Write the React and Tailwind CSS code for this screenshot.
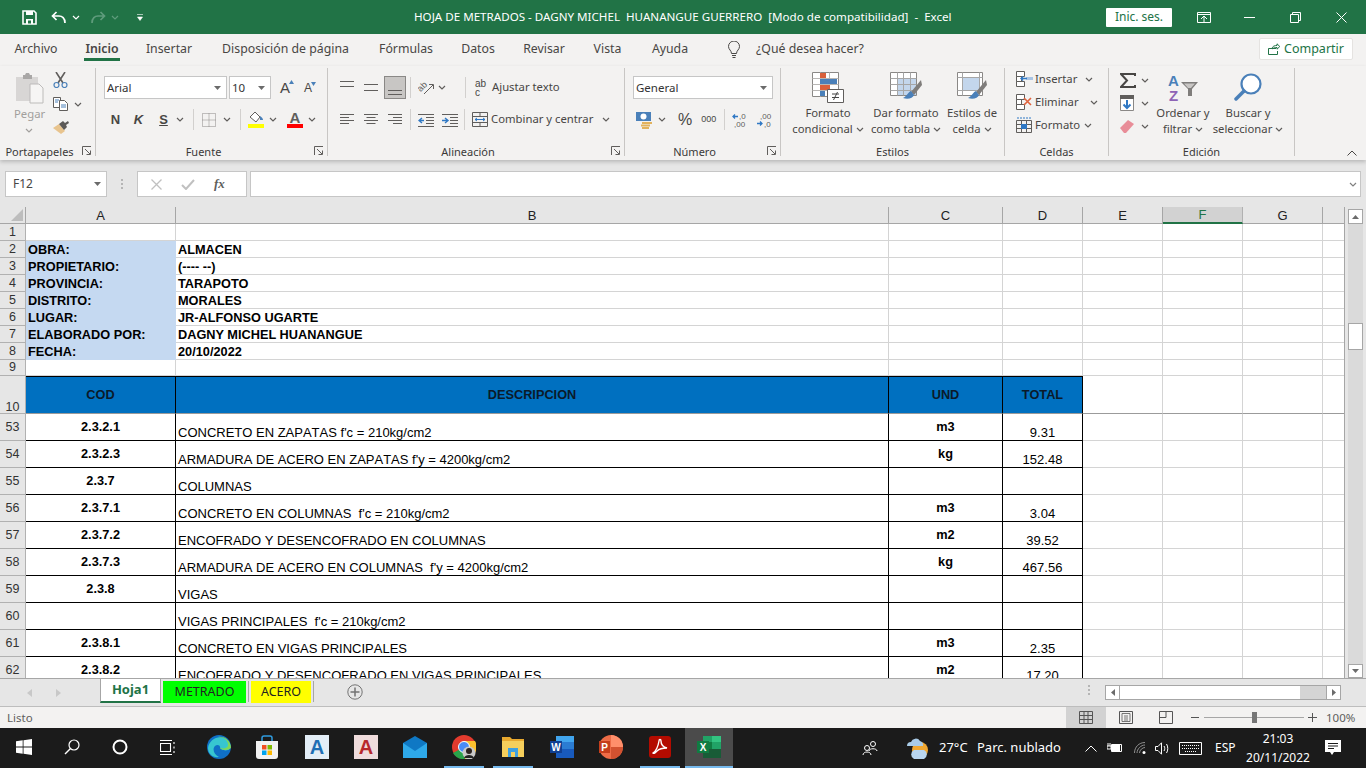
import React from 'react';

const ARIAL = "[font-family:'Liberation_Sans',Arial,sans-serif]";

const Chev = ({ className = '', color = '#605e5c' }) => (
  <svg width="8" height="5" viewBox="0 0 8 5" className={`shrink-0 ${className}`}><path d="M1 1l3 3 3-3" fill="none" stroke={color} strokeWidth="1.2" /></svg>
);
const Caret = ({ className = '' }) => (
  <svg width="7" height="4" viewBox="0 0 7 4" className={`shrink-0 ${className}`}><path d="M0 0h7L3.5 4z" fill="#6b6b6b" /></svg>
);
const Launcher = () => (
  <svg width="10" height="10" viewBox="0 0 10 10"><path d="M.5 9V.5H9M3 3l5 5M8.500 4.500v4h-4" fill="none" stroke="#605e5c" /></svg>
);
const VSep = ({ className = '' }) => <div className={`w-px h-[21px] bg-[#d2d0ce] shrink-0 ${className}`} />;

const Group = ({ w, label, launcher, children }) => (
  <div className={`${w} h-[88px] mt-[2px] shrink-0 flex flex-col border-r border-[#c8c6c4]`}>
    <div className="flex-1 min-h-0">{children}</div>
    <div className="h-[10px] flex items-center">
      <div className="flex-1 text-center text-[11px] leading-[10px] pt-[2px] text-[#3b3a39]">{label}</div>
      {launcher && <div className="w-[16px] flex justify-center"><Launcher /></div>}
    </div>
  </div>
);

/* ---------- ribbon icons ---------- */
const lineRows = {
  top: [[0, 14], [5, 14]],
  mid: [[3, 14], [9, 14]],
  bot: [[8, 14], [12, 14]],
  left: [[1, 14], [4, 9], [7, 14], [10, 9]],
  center: [[1, 14], [4, 9], [7, 14], [10, 9]],
  right: [[1, 14], [4, 9], [7, 14], [10, 9]],
};
const Lines = ({ kind }) => (
  <svg width="14" height="14" viewBox="0 0 14 14" className="shrink-0">
    {lineRows[kind].map(([y, w], i) => {
      const x = kind === 'center' ? (14 - w) / 2 : kind === 'right' ? 14 - w : 0;
      return <path key={i} d={`M${x} ${y + 0.5}h${w}`} stroke="#605e5c" />;
    })}
  </svg>
);
const PasteIcon = () => (
  <svg width="30" height="32" viewBox="0 0 30 32">
    <path d="M1 5h22v24H1z" fill="#d8d6d5" />
    <path d="M8 3h2l1-2h3l1 2h2v4H8z" fill="#a9a7a6" />
    <path d="M15 12h9l4 4v15H15z" fill="#f6f5f4" stroke="#bdbbba" />
  </svg>
);
const Scissors = () => (
  <svg width="15" height="16" viewBox="0 0 15 16"><path d="M3 0l7 11M12 0L5 11" stroke="#605e5c" strokeWidth="1.6" fill="none" /><circle cx="3.500" cy="13" r="2.500" fill="none" stroke="#4a80b9" strokeWidth="1.200" /><circle cx="11.500" cy="13" r="2.500" fill="none" stroke="#4a80b9" strokeWidth="1.200" /></svg>
);
const CopyIcon = () => (
  <svg width="15" height="14" viewBox="0 0 15 14"><path d="M.5.500h7v10h-7z" fill="#fff" stroke="#605e5c" /><path d="M6.500 3.500h5l3 3v7h-8z" fill="#fff" stroke="#605e5c" /><path d="M2 3h4M2 5h3M8 8h5M8 10h5" stroke="#4a80b9" /></svg>
);
const Painter = () => (
  <svg width="17" height="15" viewBox="0 0 17 15"><path d="M0 8l6-4 6 7-4 3z" fill="#e8c48e" /><path d="M6 4l4-3 2 2 3-2 1 2-3 2 1 2-3 3z" fill="#5c5a58" /></svg>
);
const BigA = ({ size, up }) => (
  <span className="flex items-start shrink-0">
    <span className={`${ARIAL} ${size} leading-none text-[#484644]`}>A</span>
    <svg width="5" height="4" viewBox="0 0 5 4" className="-ml-[1px]"><path d={up ? 'M0 4h5L2.500 0z' : 'M0 0h5L2.500 4z'} fill="#4a80b9" /></svg>
  </span>
);
const BorderIcon = () => (
  <svg width="14" height="14" viewBox="0 0 14 14"><path d="M.5.500h13v13H.5zM.5 7h13M7 .5v13" fill="none" stroke="#8a8886" strokeDasharray="1 1" /></svg>
);
const FillIcon = () => (
  <svg width="16" height="17" viewBox="0 0 16 17"><path d="M2 6l5-5 5 5-4 5z" fill="#fff" stroke="#605e5c" /><path d="M12 5c2 1 3 3 3 4h-3z" fill="#4a80b9" /><path d="M0 13h16v4H0z" fill="#ffff00" /></svg>
);
const FontColor = () => (
  <span className="w-[16px] flex flex-col items-center shrink-0">
    <span className={`${ARIAL} font-bold text-[15px] leading-[13px] text-[#605e5c]`}>A</span>
    <span className="w-[16px] h-[4px] bg-[#ff0000]" />
  </span>
);
const Orient = () => (
  <svg width="17" height="17" viewBox="0 0 17 17">
    <text x="0" y="11" fontSize="9" fill="#605e5c" fontFamily="Liberation Sans" transform="rotate(-45 4 9)">ab</text>
    <path d="M6 15L15 6M11 5.500h4.500V10" fill="none" stroke="#605e5c" />
  </svg>
);
const Indent = ({ inc }) => (
  <svg width="16" height="14" viewBox="0 0 16 14">
    <path d="M0 1.500h16M8 4.500h8M8 7.500h8M8 10.500h8M0 13.500h16" stroke="#605e5c" />
    <path d={inc ? 'M0 7.500h5M3 5l3 2.500L3 10' : 'M6 7.500H1M4 5L1 7.500 4 10'} fill="none" stroke="#2f78c4" strokeWidth="1.400" />
  </svg>
);
const Merge = () => (
  <svg width="16" height="15" viewBox="0 0 16 15"><path d="M.5.500h15v14H.5zM.5 4.500h15M.5 10.500h15M8 .5v4M8 10.500v4" fill="none" stroke="#605e5c" /><path d="M3 7.500h10M5 6L3 7.500 5 9M11 6l2 1.500L11 9" fill="none" stroke="#2f78c4" /></svg>
);
const Currency = () => (
  <svg width="17" height="18" viewBox="0 0 17 18"><path d="M0 1h15v9H0z" fill="#4a80b9" /><circle cx="7.500" cy="5.500" r="3" fill="#fff" /><path d="M6 11h10v2H6zM5 13.500h9v2H5zM6 16h7v2H6z" fill="#e2b25c" /></svg>
);
const DecIcon = ({ more }) => (
  <svg width="16" height="16" viewBox="0 0 16 16">
    <path d={more ? 'M1 4.500h5M3 2.500L1 4.500l2 2' : 'M0 11.500h5M3 9.500l2 2-2 2'} fill="none" stroke="#2f78c4" strokeWidth="1.300" />
    {more ? (
      <>
        <text x="7" y="7" fontSize="8" fill="#605e5c" fontFamily="Liberation Sans">,0</text>
        <text x="2" y="15" fontSize="8" fill="#605e5c" fontFamily="Liberation Sans">,00</text>
      </>
    ) : (
      <>
        <text x="3" y="7" fontSize="8" fill="#605e5c" fontFamily="Liberation Sans">,00</text>
        <text x="7" y="15" fontSize="8" fill="#605e5c" fontFamily="Liberation Sans">,0</text>
      </>
    )}
  </svg>
);
const CondFormat = () => (
  <svg width="32" height="31" viewBox="0 0 32 31">
    <path d="M.5.500h26v24H.5z" fill="#fff" stroke="#8a8886" />
    <path d="M.5 6.500h26M.5 12.500h26M.5 18.500h26M8.500.5v24M17.500.5v24" stroke="#b8b6b4" />
    <path d="M8 1h6v5H8zM8 13h10v5H8z" fill="#d9603b" /><path d="M8 7h17v5H8zM8 19h5v5H8z" fill="#4a80b9" />
    <path d="M15.500 17.500h16v13h-16z" fill="#fff" stroke="#605e5c" />
    <path d="M20 22h7M20 25.500h7M25.500 20l-4 8" stroke="#444" fill="none" />
  </svg>
);
const TableStyle = () => (
  <svg width="32" height="31" viewBox="0 0 32 31">
    <path d="M.5.500h26v23H.5z" fill="#fff" stroke="#8a8886" />
    <path d="M7 6h19v17H7z" fill="#c3d6ec" />
    <path d="M.5 6.500h26M.5 12.500h26M.5 18.500h26M7.500.5v23M13.500.5v23M20.500.5v23" stroke="#a6a6a6" />
    <path d="M31 8L21 20l3 3 8-10z" fill="#7f7d7b" /><path d="M21 19c-3 1-4 5-8 7 5 2 10 0 11-3z" fill="#4a80b9" />
  </svg>
);
const CellStyle = () => (
  <svg width="30" height="31" viewBox="0 0 30 31">
    <path d="M.5.500h25v23H.5z" fill="#fff" stroke="#8a8886" />
    <path d="M6 6h16v12H6z" fill="#c3d6ec" />
    <path d="M.5 5.500h25M.5 18.500h25M5.500.5v23M22.500.5v23" stroke="#a6a6a6" />
    <path d="M29 8L19 20l3 3 8-10z" fill="#7f7d7b" /><path d="M19 19c-3 1-4 5-8 7 5 2 10 0 11-3z" fill="#4a80b9" />
  </svg>
);
const CellsIcon = ({ kind }) => (
  <svg width="17" height="16" viewBox="0 0 17 16" className="shrink-0">
    {kind === 'fmt' ? (
      <>
        <path d="M.5 3.500h15v12H.5zM.5 7.500h15M.5 11.500h15M5.500 3.500v12M10.500 3.500v12" fill="none" stroke="#605e5c" />
        <path d="M5 7h6v5H5z" fill="#2f78c4" /><path d="M1 1h14" stroke="#2f78c4" strokeDasharray="2 1" />
      </>
    ) : (
      <>
        <path d="M.5.500h8v5h-8zM.5 5.500h5v5h-5zM.5 10.500h8v5h-8z" fill="#fff" stroke="#605e5c" />
        {kind === 'ins'
          ? <><path d="M10 6h7v3h-7z" fill="#a9c4e4" /><path d="M11 7.500H5M7 5.500l-2 2 2 2" fill="none" stroke="#2f78c4" strokeWidth="1.400" /></>
          : <path d="M8 4l7 7M15 4l-7 7" stroke="#e0623c" strokeWidth="1.600" />}
      </>
    )}
  </svg>
);
const SumIcon = () => (
  <svg width="16" height="15" viewBox="0 0 16 15"><path d="M15 3V1H1l6 6.500L1 14h14v-2" fill="none" stroke="#484644" strokeWidth="2" /></svg>
);
const FillDown = () => (
  <svg width="14" height="16" viewBox="0 0 14 16"><path d="M.5.500h13v15H.5z" fill="#fff" stroke="#8a8886" /><path d="M0 0h14v4H0z" fill="#605e5c" /><path d="M7 5v8M3.500 9.500L7 13l3.500-3.500" fill="none" stroke="#2f78c4" strokeWidth="2" /></svg>
);
const Eraser = () => (
  <svg width="14" height="13" viewBox="0 0 14 13"><path d="M0 8l8-8 6 4-8 9H4z" fill="#e88d98" /></svg>
);
const SortIcon = () => (
  <svg width="31" height="29" viewBox="0 0 31 29">
    <text x="0" y="13" fontSize="15" fontWeight="700" fill="#4a80b9" fontFamily="Liberation Sans">A</text>
    <text x="1" y="28" fontSize="15" fontWeight="700" fill="#8e63b5" fontFamily="Liberation Sans">Z</text>
    <path d="M13 9h17l-6 7v7h-4v-7z" fill="#7f7d7b" />
    <path d="M16 10.500h11l-4 4.500h-3z" fill="#c8c6c4" />
  </svg>
);
const SearchBig = () => (
  <svg width="28" height="29" viewBox="0 0 28 29"><circle cx="17" cy="11" r="9.500" fill="#fff" stroke="#4a80b9" strokeWidth="2.200" /><path d="M10 18l-8 8" stroke="#4a80b9" strokeWidth="3.500" strokeLinecap="round" /></svg>
);

const LargeButton = ({ icon, l1, l2, w }) => (
  <div className={`${w} shrink-0 flex flex-col items-center pt-[4px]`}>
    <div className="h-[31px] flex items-center">{icon}</div>
    <div className="text-[11.300px] leading-[16px] mt-[2px] whitespace-nowrap text-[#484644]">{l1}</div>
    <div className="text-[11.300px] leading-[16px] whitespace-nowrap text-[#484644] flex items-center gap-[3px]">{l2}<Chev /></div>
  </div>
);

/* ---------- ribbon ---------- */
const Ribbon = () => (
  <div className="h-[94px] shrink-0 flex bg-[#f3f2f1] shadow-[0_2px_4px_rgba(0,0,0,0.2)] relative z-10">
    <Group w="w-[96px]" label="Portapapeles" launcher>
      <div className="flex pt-[4px]">
        <div className="w-[53px] pl-[15px] flex flex-col items-start">
          <PasteIcon />
          <div className="text-[11.300px] leading-[16px] mt-[2px] -ml-[1px] text-[#a19f9d]">Pegar</div>
          <Chev className="mt-[6px] ml-[10px]" color="#a19f9d" />
        </div>
        <div className="flex flex-col">
          <Scissors />
          <div className="flex items-center mt-[9px]"><CopyIcon /><Chev className="ml-[6px]" /></div>
          <div className="mt-[9px]"><Painter /></div>
        </div>
      </div>
    </Group>

    <Group w="w-[232px]" label="Fuente" launcher>
      <div className="flex items-center pl-[8px] pt-[8px]">
        <div className="w-[123px] h-[23px] bg-white border border-[#c6c6c6] flex items-center justify-between pl-[2px] pr-[5px] text-[11.500px]"><span className="text-[#333]">Arial</span><Caret /></div>
        <div className="w-[42px] h-[23px] ml-[2px] bg-white border border-[#c6c6c6] flex items-center justify-between pl-[2px] pr-[5px] text-[11.500px]"><span className="text-[#333]">10</span><Caret /></div>
        <div className="ml-[9px]"><BigA size="text-[15px]" up /></div>
        <div className="ml-[10px]"><BigA size="text-[12px]" /></div>
      </div>
      <div className="flex items-center pl-[8px] mt-[9px] h-[23px]">
        <span className={`${ARIAL} w-[23px] text-center font-bold text-[13px] text-[#484644]`}>N</span>
        <span className={`${ARIAL} w-[23px] text-center font-bold italic text-[13px] text-[#484644]`}>K</span>
        <span className={`${ARIAL} w-[23px] ml-[2px] text-center font-bold underline text-[13px] text-[#484644]`}>S</span>
        <Chev className="ml-[1px]" />
        <VSep className="ml-[9px]" />
        <div className="ml-[8px] flex"><BorderIcon /></div>
        <Chev className="ml-[7px]" />
        <VSep className="ml-[9px]" />
        <div className="ml-[7px] flex"><FillIcon /></div>
        <Chev className="ml-[5px]" />
        <div className="ml-[10px] flex"><FontColor /></div>
        <Chev className="ml-[5px]" />
      </div>
    </Group>

    <Group w="w-[297px]" label="Alineación" launcher>
      <div className="flex items-center pl-[12px] pt-[8px] h-[31px]">
        <Lines kind="top" />
        <div className="ml-[10px]"><Lines kind="mid" /></div>
        <div className="ml-[6px] w-[22px] h-[23px] bg-[#c8c6c4] border border-[#8a8886] flex items-end justify-center pb-[2px]"><Lines kind="bot" /></div>
        <VSep className="ml-[4px]" />
        <div className="ml-[7px] flex"><Orient /></div>
        <Chev className="ml-[3px]" />
        <VSep className="ml-[19px]" />
        <span className={`${ARIAL} ml-[9px] w-[14px] text-[10px] leading-[9px] text-[#484644]`}>ab<br />c</span>
        <span className="ml-[3px] text-[11.300px] text-[#484644] whitespace-nowrap">Ajustar texto</span>
      </div>
      <div className="flex items-center pl-[12px] mt-[9px] h-[23px]">
        <Lines kind="left" />
        <div className="ml-[10px]"><Lines kind="center" /></div>
        <div className="ml-[10px]"><Lines kind="right" /></div>
        <VSep className="ml-[8px]" />
        <div className="ml-[7px] flex"><Indent /></div>
        <div className="ml-[8px] flex"><Indent inc /></div>
        <VSep className="ml-[6px]" />
        <div className="ml-[7px] flex"><Merge /></div>
        <span className="ml-[3px] w-[111px] text-[11.300px] text-[#484644] whitespace-nowrap">Combinar y centrar</span>
        <Chev />
      </div>
    </Group>

    <Group w="w-[156px]" label="Número" launcher>
      <div className="pl-[8px] pt-[8px]">
        <div className="w-[140px] h-[23px] bg-white border border-[#c6c6c6] flex items-center justify-between pl-[2px] pr-[5px] text-[11.500px]"><span className="text-[#333]">General</span><Caret /></div>
      </div>
      <div className="flex items-center pl-[11px] mt-[9px] h-[23px]">
        <Currency />
        <Chev className="ml-[5px]" />
        <span className={`${ARIAL} ml-[12px] text-[16px] text-[#484644]`}>%</span>
        <span className={`${ARIAL} ml-[9px] text-[9px] text-[#484644]`}>000</span>
        <VSep className="ml-[8px]" />
        <div className="ml-[7px] flex"><DecIcon more /></div>
        <div className="ml-[9px] flex"><DecIcon /></div>
      </div>
    </Group>

    <Group w="w-[224px]" label="Estilos">
      <div className="flex pl-[6px]">
        <LargeButton w="w-[82px]" icon={<CondFormat />} l1="Formato" l2="condicional" />
        <LargeButton w="w-[74px]" icon={<TableStyle />} l1="Dar formato" l2="como tabla" />
        <LargeButton w="w-[58px]" icon={<CellStyle />} l1="Estilos de" l2="celda" />
      </div>
    </Group>

    <Group w="w-[104px]" label="Celdas">
      <div className="flex flex-col pl-[11px] pt-[3px] gap-[7px] text-[11.300px] text-[#484644]">
        <div className="flex items-center h-[16px]"><CellsIcon kind="ins" /><span className="ml-[2px] w-[48px]">Insertar</span><Chev className="ml-[2px]" /></div>
        <div className="flex items-center h-[16px]"><CellsIcon kind="del" /><span className="ml-[2px] w-[52px]">Eliminar</span><Chev className="ml-[3px]" /></div>
        <div className="flex items-center h-[16px]"><CellsIcon kind="fmt" /><span className="ml-[2px] w-[48px]">Formato</span><Chev className="ml-[1px]" /></div>
      </div>
    </Group>

    <Group w="w-[186px]" label="Edición">
      <div className="flex pl-[11px]">
        <div className="w-[34px] flex flex-col pt-[4px] gap-[7px]">
          <div className="flex items-center h-[16px]"><SumIcon /><Chev className="ml-[5px]" /></div>
          <div className="flex items-center h-[16px]"><FillDown /><Chev className="ml-[7px]" /></div>
          <div className="flex items-center h-[16px]"><Eraser /><Chev className="ml-[7px]" /></div>
        </div>
        <LargeButton w="w-[58px]" icon={<SortIcon />} l1="Ordenar y" l2="filtrar" />
        <div className="w-[1px]" />
        <LargeButton w="w-[70px]" icon={<SearchBig />} l1="Buscar y" l2="seleccionar" />
      </div>
    </Group>

    <div className="flex-1 flex justify-end items-end pb-[4px] pr-[9px]">
      <svg width="10" height="6" viewBox="0 0 10 6"><path d="M.5 5.500L5 1l4.500 4.500" fill="none" stroke="#484644" /></svg>
    </div>
  </div>
);

/* ---------- top bars ---------- */
const tabs = [
  ['Archivo', 'w-[72px]'], ['Inicio', 'w-[60px]'], ['Insertar', 'w-[74px]'], ['Disposición de página', 'w-[159px]'],
  ['Fórmulas', 'w-[82px]'], ['Datos', 'w-[62px]'], ['Revisar', 'w-[70px]'], ['Vista', 'w-[57px]'], ['Ayuda', 'w-[68px]'],
];

const TitleBar = () => (
  <div className="h-[34px] shrink-0 bg-[#217346] flex items-center text-white">
    <div className="w-[414px] shrink-0 flex items-center pl-[22px]">
      <svg width="15" height="15" viewBox="0 0 15 15"><path d="M1 1h11l2 2v11H1z" fill="none" stroke="#fff" strokeWidth="1.600" /><path d="M4 1h7v4H4zM4 9h7v5H4z" fill="#fff" /><path d="M6 10.500h3v3H6z" fill="#217346" /></svg>
      <svg width="15" height="13" viewBox="0 0 15 13" className="ml-[14px]"><path d="M14 12c0-5-3-7-6-7H2M5.500 1L1.500 5l4 4" fill="none" stroke="#fff" strokeWidth="1.700" /></svg>
      <Chev color="#fff" className="ml-[6px]" />
      <svg width="15" height="13" viewBox="0 0 15 13" className="ml-[11px]"><path d="M1 12c0-5 3-7 6-7h6M9.500 1l4 4-4 4" fill="none" stroke="#5f9c7c" strokeWidth="1.700" /></svg>
      <Chev color="#5f9c7c" className="ml-[5px]" />
      <svg width="6" height="7" viewBox="0 0 6 7" className="ml-[18px]"><path d="M0 .5h6M.5 3h5L3 6.500z" fill="#fff" stroke="#fff" strokeWidth=".6" /></svg>
    </div>
    <div className="w-[692px] shrink-0 text-[11.600px] whitespace-pre">HOJA DE METRADOS - DAGNY MICHEL  HUANANGUE GUERRERO  [Modo de compatibilidad]  -  Excel</div>
    <div className="w-[66px] h-[19px] shrink-0 bg-white rounded-[1px] text-[#217346] text-[12px] flex items-center justify-center">Inic. ses.</div>
    <svg width="14" height="11" viewBox="0 0 14 11" className="ml-[25px]"><path d="M.5.500h13v10H.5zM.5 2.500h13M4 7l3-3 3 3M7 4v6" fill="none" stroke="#fff" /></svg>
    <div className="ml-[33px] w-[11px] h-px bg-white" />
    <svg width="11" height="11" viewBox="0 0 11 11" className="ml-[35px]"><path d="M.5 2.500h8v8h-8zM2.500 2.500V.5h8v8H8.500" fill="none" stroke="#fff" /></svg>
    <svg width="11" height="11" viewBox="0 0 11 11" className="ml-[35px]"><path d="M.5.500l10 10M10.500.5l-10 10" stroke="#fff" /></svg>
  </div>
);

const TabRow = () => (
  <div className="h-[32px] shrink-0 bg-[#f3f2f1] flex text-[12.300px] text-[#484644]">
    {tabs.map(([t, w]) => (
      <div key={t} className={`${w} shrink-0 flex justify-center`}>
        <div className={`h-[27px] flex items-center ${t === 'Inicio' ? 'border-b-[3px] border-[#217346] font-semibold px-[1px] pt-[6px]' : 'pt-[3px]'}`}>{t}</div>
      </div>
    ))}
    <div className="w-[23px] shrink-0" />
    <div className="h-[27px] pt-[3px] flex items-center">
      <svg width="14" height="17" viewBox="0 0 14 17"><path d="M4.500 12.500c0-3-3-4-3-7a5.500 5.500 0 0111 0c0 3-3 4-3 7zM5 14.500h4M5.500 16.500h3" fill="none" stroke="#484644" /></svg>
      <span className="ml-[15px] whitespace-nowrap">¿Qué desea hacer?</span>
    </div>
    <div className="flex-1 flex justify-end pr-[13px] pt-[4px]">
      <div className="w-[94px] h-[22px] bg-white rounded-[2px] border border-[#e5e3e1] flex items-center justify-center gap-[4px] text-[#217346] text-[12.500px]">
        <svg width="12" height="12" viewBox="0 0 12 12"><path d="M8 5.500H.5v6h9V8M4 6c0-3 3-3.500 5-3.500V.8l2.800 2.700L9 6.200V4.500C7 4.500 5 5 4 6z" fill="none" stroke="#217346" /></svg>
        Compartir
      </div>
    </div>
  </div>
);

const FormulaBar = () => (
  <div className="h-[47px] shrink-0 bg-[#e6e6e6] flex pt-[11px] pl-[5px]">
    <div className="w-[102px] h-[26px] bg-white border border-[#c6c6c6] flex items-center justify-between pl-[7px] pr-[5px] text-[12px] text-[#484644]">F12<Caret /></div>
    <div className="w-[30px] h-[26px] flex flex-col gap-[2px] items-center justify-center">
      <div className="w-[2px] h-[2px] bg-[#b5b5b5]" /><div className="w-[2px] h-[2px] bg-[#b5b5b5]" /><div className="w-[2px] h-[2px] bg-[#b5b5b5]" />
    </div>
    <div className="w-[110px] h-[26px] bg-white border border-[#c6c6c6] flex items-center text-[#c0c0c0]">
      <svg width="11" height="11" viewBox="0 0 11 11" className="ml-[13px]"><path d="M.5.500l10 10M10.500.5l-10 10" stroke="#c0c0c0" strokeWidth="1.300" /></svg>
      <svg width="14" height="11" viewBox="0 0 14 11" className="ml-[19px]"><path d="M1 6l4 4 8-9" fill="none" stroke="#c0c0c0" strokeWidth="2" /></svg>
      <span className="ml-[19px] [font-family:'Liberation_Serif',serif] italic font-bold text-[#605e5c] text-[13px]">fx</span>
    </div>
    <div className="w-[1111px] h-[26px] ml-[3px] bg-white border border-[#c6c6c6] flex items-center justify-end pr-[3px]"><Chev color="#808080" /></div>
  </div>
);

/* ---------- sheet ---------- */
const infoRows = [
  ['2', 'OBRA:', 'ALMACEN'], ['3', 'PROPIETARIO:', '(---- --)'], ['4', 'PROVINCIA:', 'TARAPOTO'], ['5', 'DISTRITO:', 'MORALES'],
  ['6', 'LUGAR:', 'JR-ALFONSO UGARTE'], ['7', 'ELABORADO POR:', 'DAGNY MICHEL HUANANGUE'], ['8', 'FECHA:', '20/10/2022'],
];
const dataRows = [
  ['53', '2.3.2.1', "CONCRETO EN ZAPATAS f'c = 210kg/cm2", 'm3', '9.31'],
  ['54', '2.3.2.3', "ARMADURA DE ACERO EN ZAPATAS f'y = 4200kg/cm2", 'kg', '152.48'],
  ['55', '2.3.7', 'COLUMNAS', '', ''],
  ['56', '2.3.7.1', "CONCRETO EN COLUMNAS  f'c = 210kg/cm2", 'm3', '3.04'],
  ['57', '2.3.7.2', 'ENCOFRADO Y DESENCOFRADO EN COLUMNAS', 'm2', '39.52'],
  ['58', '2.3.7.3', "ARMADURA DE ACERO EN COLUMNAS  f'y = 4200kg/cm2", 'kg', '467.56'],
  ['59', '2.3.8', 'VIGAS', '', ''],
  ['60', '', "VIGAS PRINCIPALES  f'c = 210kg/cm2", '', ''],
  ['61', '2.3.8.1', 'CONCRETO EN VIGAS PRINCIPALES', 'm3', '2.35'],
  ['62', '2.3.8.2', 'ENCOFRADO Y DESENCOFRADO EN VIGAS PRINCIPALES', 'm2', '17.20'],
];

const gridLine = 'border-r border-b border-[#d4d4d4]';
const RowHead = ({ n, h, end }) => (
  <div className={`${h} bg-[#e6e6e6] border-r border-b border-[#b1b1b1] flex justify-center ${end ? 'items-end' : 'items-center'} text-[12.500px] leading-none text-[#333] ${ARIAL}`}>{n}</div>
);
const Blank = ({ h, extra = '' }) => <div className={`${h} ${gridLine} ${extra}`} />;
const TrailingCells = ({ h, line = gridLine }) => (
  <>
    <div className={`${h} ${line}`} /><div className={`${h} ${line}`} /><div className={`${h} ${line}`} /><div className={`${h} ${line}`} />
  </>
);

const ColHead = ({ l, active }) => (
  <div className={`h-[17px] flex items-center justify-center border-r border-b text-[13px] leading-none ${ARIAL} ${active ? 'bg-[#d2d2d2] text-[#217346] border-b-2 border-b-[#217346] border-r-[#b1b1b1]' : 'bg-[#e6e6e6] text-[#222] border-[#a6a6a6]'}`}>{l}</div>
);

const Sheet = () => (
  <div className="h-[471px] shrink-0 flex bg-[#e6e6e6] overflow-hidden">
    <div className={`w-[1345px] h-[471px] overflow-hidden grid grid-cols-[26px_150px_713px_114px_80px_80px_80px_80px_22px] auto-rows-min content-start bg-white text-black border-r border-[#a6a6a6] ${ARIAL}`}>
      <div className="h-[17px] bg-[#e6e6e6] border-r border-b border-[#a6a6a6] flex items-end justify-end pr-[2px] pb-[2px]">
        <svg width="12" height="12" viewBox="0 0 12 12"><path d="M12 0v12H0z" fill="#bdbdbd" /></svg>
      </div>
      {['A', 'B', 'C', 'D', 'E', 'F', 'G', ''].map((l) => <ColHead key={l} l={l} active={l === 'F'} />)}

      <RowHead n="1" h="h-[17px]" />
      <Blank h="h-[17px]" /><Blank h="h-[17px]" /><Blank h="h-[17px]" /><Blank h="h-[17px]" /><TrailingCells h="h-[17px]" />

      {infoRows.map(([n, a, b]) => (
        <React.Fragment key={n}>
          <RowHead n={n} h="h-[17px]" />
          <div className="h-[17px] bg-[#c5d9f1] pl-[2px] font-bold text-[12.750px] leading-[18px] whitespace-nowrap">{a}</div>
          <div className={`h-[17px] pl-[2px] font-bold text-[12.750px] leading-[18px] whitespace-nowrap ${gridLine}`}>{b}</div>
          <Blank h="h-[17px]" /><Blank h="h-[17px]" /><TrailingCells h="h-[17px]" />
        </React.Fragment>
      ))}

      <RowHead n="9" h="h-[16px]" />
      <Blank h="h-[16px]" /><Blank h="h-[16px]" /><Blank h="h-[16px]" /><Blank h="h-[16px]" /><TrailingCells h="h-[16px]" />

      <RowHead n="10" h="h-[38px]" end />
      {['COD', 'DESCRIPCION', 'UND', 'TOTAL'].map((t) => (
        <div key={t} className="h-[38px] bg-[#0070c0] border-t border-r border-t-black border-r-black border-b border-b-[#9b9b9b] flex items-center justify-center font-bold text-[12.750px] text-[#0b1a2a]">{t}</div>
      ))}
      <TrailingCells h="h-[38px]" line="border-r border-r-[#d4d4d4] border-b border-b-[#9b9b9b]" />

      {dataRows.map(([n, cod, desc, und, total]) => (
        <React.Fragment key={n}>
          <RowHead n={n} h="h-[27px]" />
          <div className="h-[27px] border-r border-b border-black flex items-center justify-center font-bold text-[12.750px] pb-[1px]">{cod}</div>
          <div className="h-[27px] border-r border-b border-black flex items-end pl-[2px] text-[13px] [font-kerning:none] leading-[15px] whitespace-pre">{desc}</div>
          <div className="h-[27px] border-r border-b border-black flex items-center justify-center font-bold text-[12.750px] pb-[1px]">{und}</div>
          <div className="h-[27px] border-r border-b border-black flex items-end justify-center text-[13px] leading-[15px]">{total}</div>
          <TrailingCells h="h-[27px]" />
        </React.Fragment>
      ))}
    </div>
    <div className="w-[15px] ml-[3px] mt-[2px] bg-[#dadada] flex flex-col">
      <div className="h-[15px] bg-white border border-[#a6a6a6] flex items-center justify-center"><svg width="7" height="4" viewBox="0 0 7 4"><path d="M0 4h7L3.500 0z" fill="#6b6b6b" /></svg></div>
      <div className="h-[99px]" />
      <div className="h-[27px] bg-white border border-[#a6a6a6]" />
      <div className="flex-1" />
      <div className="h-[14px] bg-white border border-[#a6a6a6] flex items-center justify-center"><Caret /></div>
    </div>
  </div>
);

const SheetTabs = () => (
  <div className="h-[29px] shrink-0 bg-[#e6e6e6] border-y border-t-[#a6a6a6] border-b-[#bdbdbd] flex items-start text-[13px]">
    <div className="w-[100px] h-[27px] flex items-center pl-[27px] gap-[24px]">
      <svg width="5" height="8" viewBox="0 0 5 8"><path d="M5 0v8L0 4z" fill="#c8c8c8" /></svg>
      <svg width="5" height="8" viewBox="0 0 5 8"><path d="M0 0v8l5-4z" fill="#c8c8c8" /></svg>
    </div>
    <div className="w-[61px] h-[24px] bg-white border-x border-[#a6a6a6] border-b-2 border-b-[#217346] flex items-center justify-center font-bold text-[#217346]">Hoja1</div>
    <div className="w-[83px] h-[22px] mt-[2px] ml-[2px] bg-[#00ff00] flex items-center justify-center text-[12.500px] text-[#222]">METRADO</div>
    <div className="w-px h-[21px] mt-[2px] ml-[2px] bg-[#a6a6a6]" />
    <div className="w-[60px] h-[22px] mt-[2px] ml-[2px] bg-[#ffff00] flex items-center justify-center text-[12.500px] text-[#222]">ACERO</div>
    <div className="w-px h-[21px] mt-[2px] ml-[2px] bg-[#a6a6a6]" />
    <svg width="16" height="16" viewBox="0 0 16 16" className="ml-[33px] mt-[5px]"><circle cx="8" cy="8" r="7.200" fill="none" stroke="#737373" /><path d="M8 3.500v9M3.500 8h9" stroke="#737373" strokeWidth="1.500" /></svg>
    <div className="ml-[725px] mt-[6px] flex flex-col gap-[2px]">
      <div className="w-[2px] h-[2px] bg-[#b5b5b5]" /><div className="w-[2px] h-[2px] bg-[#b5b5b5]" /><div className="w-[2px] h-[2px] bg-[#b5b5b5]" />
    </div>
    <div className="ml-[15px] mt-[6px] w-[236px] h-[15px] bg-[#d4d4d4] border border-[#a6a6a6] flex items-stretch">
      <div className="w-[14px] bg-white border-r border-[#a6a6a6] flex items-center justify-center"><svg width="4" height="7" viewBox="0 0 4 7"><path d="M4 0v7L0 3.500z" fill="#6b6b6b" /></svg></div>
      <div className="w-[180px] bg-white" />
      <div className="flex-1" />
      <div className="w-[14px] bg-white border-l border-[#a6a6a6] flex items-center justify-center"><svg width="4" height="7" viewBox="0 0 4 7"><path d="M0 0v7l4-3.500z" fill="#6b6b6b" /></svg></div>
    </div>
  </div>
);

const StatusBar = () => (
  <div className="h-[21px] shrink-0 bg-[#f3f2f1] flex items-center text-[11.500px] text-[#605e5c]">
    <div className="w-[1066px] pl-[7px]">Listo</div>
    <div className="w-[40px] h-full bg-[#d2d2d2] flex items-center justify-center">
      <svg width="14" height="13" viewBox="0 0 14 13"><path d="M.5.500h13v12H.5zM.5 4.500h13M.5 8.500h13M5 .5v12M9 .5v12" fill="none" stroke="#555" /></svg>
    </div>
    <svg width="14" height="13" viewBox="0 0 14 13" className="ml-[13px]"><path d="M.5.500h13v12H.5z" fill="none" stroke="#555" /><path d="M3 2.500h8v8H3zM5 5h4M5 7h4M5 9h4" fill="none" stroke="#555" strokeWidth=".8" /></svg>
    <svg width="14" height="13" viewBox="0 0 14 13" className="ml-[26px]"><path d="M.5.500h13v12H.5zM7 .5v6H.5" fill="none" stroke="#555" /></svg>
    <div className="ml-[18px] w-[8px] h-px bg-[#555]" />
    <div className="ml-[5px] w-[100px] h-px bg-[#a6a6a6] flex items-center pl-[48px]"><div className="w-[5px] h-[11px] bg-[#767676] shrink-0" /></div>
    <svg width="9" height="9" viewBox="0 0 9 9" className="ml-[4px]"><path d="M4.500 0v9M0 4.500h9" stroke="#555" /></svg>
    <span className="ml-[9px] text-[#605e5c]">100%</span>
  </div>
);

/* ---------- taskbar ---------- */
const Slot = ({ w = 'w-[48px]', ml = '', active, line, children }) => (
  <div className={`${w} ${ml} h-[40px] shrink-0 flex items-center justify-center border-b-2 ${active ? 'bg-[#4b4b4b] border-[#76b9ed]' : line ? 'border-[#76b9ed]' : 'border-transparent'} `}>{children}</div>
);

const Taskbar = () => (
  <div className="h-[40px] shrink-0 bg-[#1b1b1b] flex items-center text-white">
    <Slot><svg width="16" height="16" viewBox="0 0 16 16"><path d="M0 2.300L6.700 1.300v6.300H0zM7.500 1.200L16 0v7.600H7.500zM0 8.400h6.700v6.300L0 13.700zM7.500 8.400H16V16l-8.500-1.200z" fill="#fff" /></svg></Slot>
    <Slot><svg width="16" height="16" viewBox="0 0 16 16"><circle cx="10" cy="6" r="5" fill="none" stroke="#fff" strokeWidth="1.200" /><path d="M6.500 9.500L1 15" stroke="#fff" strokeWidth="1.400" /></svg></Slot>
    <Slot><svg width="16" height="16" viewBox="0 0 16 16"><circle cx="8" cy="8" r="6.500" fill="none" stroke="#fff" strokeWidth="2" /></svg></Slot>
    <Slot><svg width="16" height="15" viewBox="0 0 16 15"><path d="M0 .5h12M0 14.500h12M.5 3.500h10v8H.5zM14 2v2M14 6.500v2M14 11v2" fill="none" stroke="#fff" strokeWidth="1.100" /></svg></Slot>
    <Slot ml="ml-[3px]"><svg width="24" height="24" viewBox="0 0 24 24"><circle cx="12" cy="12" r="12" fill="#0f6fc6" /><path d="M1 13C2 4 14-2 21 6c3 3 3 8 0 9-3 1-8 0-8-3 0-2-3-3-5-1-3 3-1 9 4 11C6 23 1 19 1 13z" fill="#37c6d0" /><path d="M24 13c0-7-6-12-13-11 6 0 10 3 10 8 0 3-4 4-8 3 1 2 8 3 11 0z" fill="#7fd858" /></svg></Slot>
    <Slot><svg width="24" height="24" viewBox="0 0 24 24"><path d="M7 6V3a2 2 0 012-2h6a2 2 0 012 2v3" fill="none" stroke="#2f9ce0" strokeWidth="1.500" /><path d="M1 6h22v15a3 3 0 01-3 3H4a3 3 0 01-3-3z" fill="#f2f2f2" /><path d="M7 10h4.500v4.500H7z" fill="#f25022" /><path d="M12.500 10H17v4.500h-4.500z" fill="#7fba00" /><path d="M7 15.500h4.500V20H7z" fill="#00a4ef" /><path d="M12.500 15.500H17V20h-4.500z" fill="#ffb900" /></svg></Slot>
    <Slot ml="ml-[2px]"><div className={`w-[24px] h-[24px] bg-[#e3eef7] flex items-center justify-center ${ARIAL} font-bold text-[20px] text-[#1e6fb5]`}>A</div></Slot>
    <Slot ml="ml-[1px]"><div className={`w-[24px] h-[24px] bg-[#efdcdc] flex items-center justify-center ${ARIAL} font-bold text-[20px] text-[#b8282c]`}>A</div></Slot>
    <Slot ml="ml-[1px]"><svg width="24" height="22" viewBox="0 0 24 22"><path d="M0 7l12-7 12 7v15H0z" fill="#0f78c4" /><path d="M0 7l12 8 12-8v15H0z" fill="#2ea9ea" /></svg></Slot>
    <Slot w="w-[40px]" ml="ml-[5px]" line><svg width="24" height="24" viewBox="0 0 24 24"><circle cx="12" cy="12" r="12" fill="#e33b2e" /><path d="M12 12L1 18a12 12 0 0012 6z" fill="#2aa24a" /><path d="M12 6h11a12 12 0 01-10 18z" fill="#fbc02d" /><circle cx="12" cy="12" r="5.500" fill="#4a8bf5" stroke="#fff" /><circle cx="17" cy="18" r="6.500" fill="#c9c9c9" /><circle cx="17" cy="16" r="3" fill="#2b2220" /><path d="M12 23c1-4 9-4 10 0z" fill="#222" /></svg></Slot>
    <Slot w="w-[40px]" ml="ml-[9px]" line><svg width="22" height="20" viewBox="0 0 22 20"><path d="M0 0h8l2 2h12v18H0z" fill="#e8a92f" /><path d="M0 4h22v16H0z" fill="#f6cf5c" /><path d="M6 11h10v9h-3v-5H9v5H6z" fill="#3fa0e0" /></svg></Slot>
    <Slot ml="ml-[5px]"><svg width="24" height="22" viewBox="0 0 24 22"><path d="M6 0h18v22H6z" fill="#185abd" /><path d="M6 0h18v6H6z" fill="#41a5ee" /><path d="M6 6h18v7H6z" fill="#2b7cd3" /><path d="M0 5h12v12H0z" fill="#103f91" /><text x="6" y="15" textAnchor="middle" fontSize="10" fontWeight="700" fill="#fff" fontFamily="Liberation Sans">W</text></svg></Slot>
    <Slot ml="ml-[1px]"><svg width="24" height="24" viewBox="0 0 24 24"><circle cx="12" cy="12" r="12" fill="#ed6c47" /><path d="M12 0a12 12 0 0112 12H12z" fill="#ff8f6b" /><path d="M12 12h12a12 12 0 01-12 12z" fill="#d35230" /><path d="M0 6h11v12H0z" fill="#c43e1c" /><text x="5.500" y="16" textAnchor="middle" fontSize="10" fontWeight="700" fill="#fff" fontFamily="Liberation Sans">P</text></svg></Slot>
    <Slot w="w-[40px]" ml="ml-[5px]" line><svg width="22" height="22" viewBox="0 0 22 22"><rect width="22" height="22" rx="3" fill="#b30b00" /><path d="M4 17c3-2 5-6 6-12 0-2 2-2 2 0 0 4 2 6 6 7-4 0-8 1-10 3-2 2-3 3-4 2z" fill="none" stroke="#fff" strokeWidth="1.400" /></svg></Slot>
    <Slot ml="ml-[5px]" active><svg width="24" height="22" viewBox="0 0 24 22"><path d="M6 0h18v22H6z" fill="#185c37" /><path d="M15 0h9v6h-9z" fill="#33c481" /><path d="M6 0h9v6H6zM15 6h9v7h-9z" fill="#21a366" /><path d="M6 6h9v7H6z" fill="#107c41" /><path d="M0 5h12v12H0z" fill="#107c41" /><text x="6" y="15" textAnchor="middle" fontSize="10" fontWeight="700" fill="#fff" fontFamily="Liberation Sans">X</text></svg></Slot>
    <div className="w-[129px] shrink-0" />
    <svg width="16" height="16" viewBox="0 0 16 16" className="shrink-0"><circle cx="11" cy="4" r="2.500" fill="none" stroke="#fff" /><path d="M7 11c0-3 8-3 8 0" fill="none" stroke="#fff" /><circle cx="5" cy="8" r="2.500" fill="none" stroke="#fff" /><path d="M1 15c0-4 8-4 8 0" fill="none" stroke="#fff" /></svg>
    <svg width="26" height="24" viewBox="0 0 26 24" className="ml-[27px] shrink-0"><circle cx="15" cy="14" r="8" fill="#f0a732" /><path d="M2 10a4 4 0 014-4 5 5 0 019-1 4 4 0 013 5z" fill="#a9cbe8" /><path d="M9 23a5 5 0 010-9h10a5 5 0 010 9z" fill="#b9d6f0" /></svg>
    <span className="ml-[8px] w-[38px] text-[13px] whitespace-nowrap">27°C</span>
    <span className="text-[13px] w-[108px] whitespace-nowrap">Parc. nublado</span>
    <svg width="12" height="7" viewBox="0 0 12 7" className="shrink-0"><path d="M.5 6.500L6 1l5.500 5.500" fill="none" stroke="#fff" /></svg>
    <svg width="16" height="10" viewBox="0 0 16 10" className="ml-[10px] shrink-0"><path d="M4.500 1.500h10v7h-10z" fill="none" stroke="#fff" /><path d="M5 2h8v6H5z" fill="#fff" /><path d="M0 3h4v3H0zM1 0v3M3 0v3" fill="none" stroke="#fff" /></svg>
    <svg width="12" height="12" viewBox="0 0 12 12" className="ml-[11px] shrink-0"><path d="M.5 11C.5 5 5 .5 11 .5M3 11c0-4 4-8 8-8M5.500 11c0-3 3-5.500 5.500-5.500" fill="none" stroke="#8f8f8f" /><circle cx="10" cy="10.500" r="1.500" fill="#fff" /></svg>
    <svg width="15" height="13" viewBox="0 0 15 13" className="ml-[9px] shrink-0"><path d="M.5 4.500h2.500L6.500.8v11.400L3 8.500H.5zM9 4c1 1.500 1 3.500 0 5M11.500 2c1.700 2.500 1.700 6.500 0 9" fill="none" stroke="#fff" /></svg>
    <svg width="23" height="13" viewBox="0 0 23 13" className="ml-[9px] shrink-0"><path d="M.5.500h22v12H.5z" fill="none" stroke="#fff" /><path d="M3 3.500h17M3 6.500h17M6 9.500h11" stroke="#fff" strokeDasharray="1 1" /></svg>
    <span className="ml-[13px] w-[19px] text-[12px]">ESP</span>
    <div className="ml-[12px] w-[64px] flex flex-col items-center text-[12px] leading-[19px] whitespace-nowrap"><span>21:03</span><span>20/11/2022</span></div>
    <svg width="16" height="16" viewBox="0 0 16 16" className="ml-[15px] shrink-0"><path d="M0 0h16v12H9l-2 3-2-3H0z" fill="#fff" /><path d="M3 3.500h10M3 6h10M3 8.500h6" stroke="#1b1b1b" /></svg>
  </div>
);

export default function App() {
  return (
    <div className="w-[1366px] h-[768px] overflow-hidden flex flex-col bg-[#e6e6e6] [font-family:'Noto_Sans',sans-serif]">
      <TitleBar />
      <TabRow />
      <Ribbon />
      <FormulaBar />
      <Sheet />
      <SheetTabs />
      <StatusBar />
      <Taskbar />
    </div>
  );
}
